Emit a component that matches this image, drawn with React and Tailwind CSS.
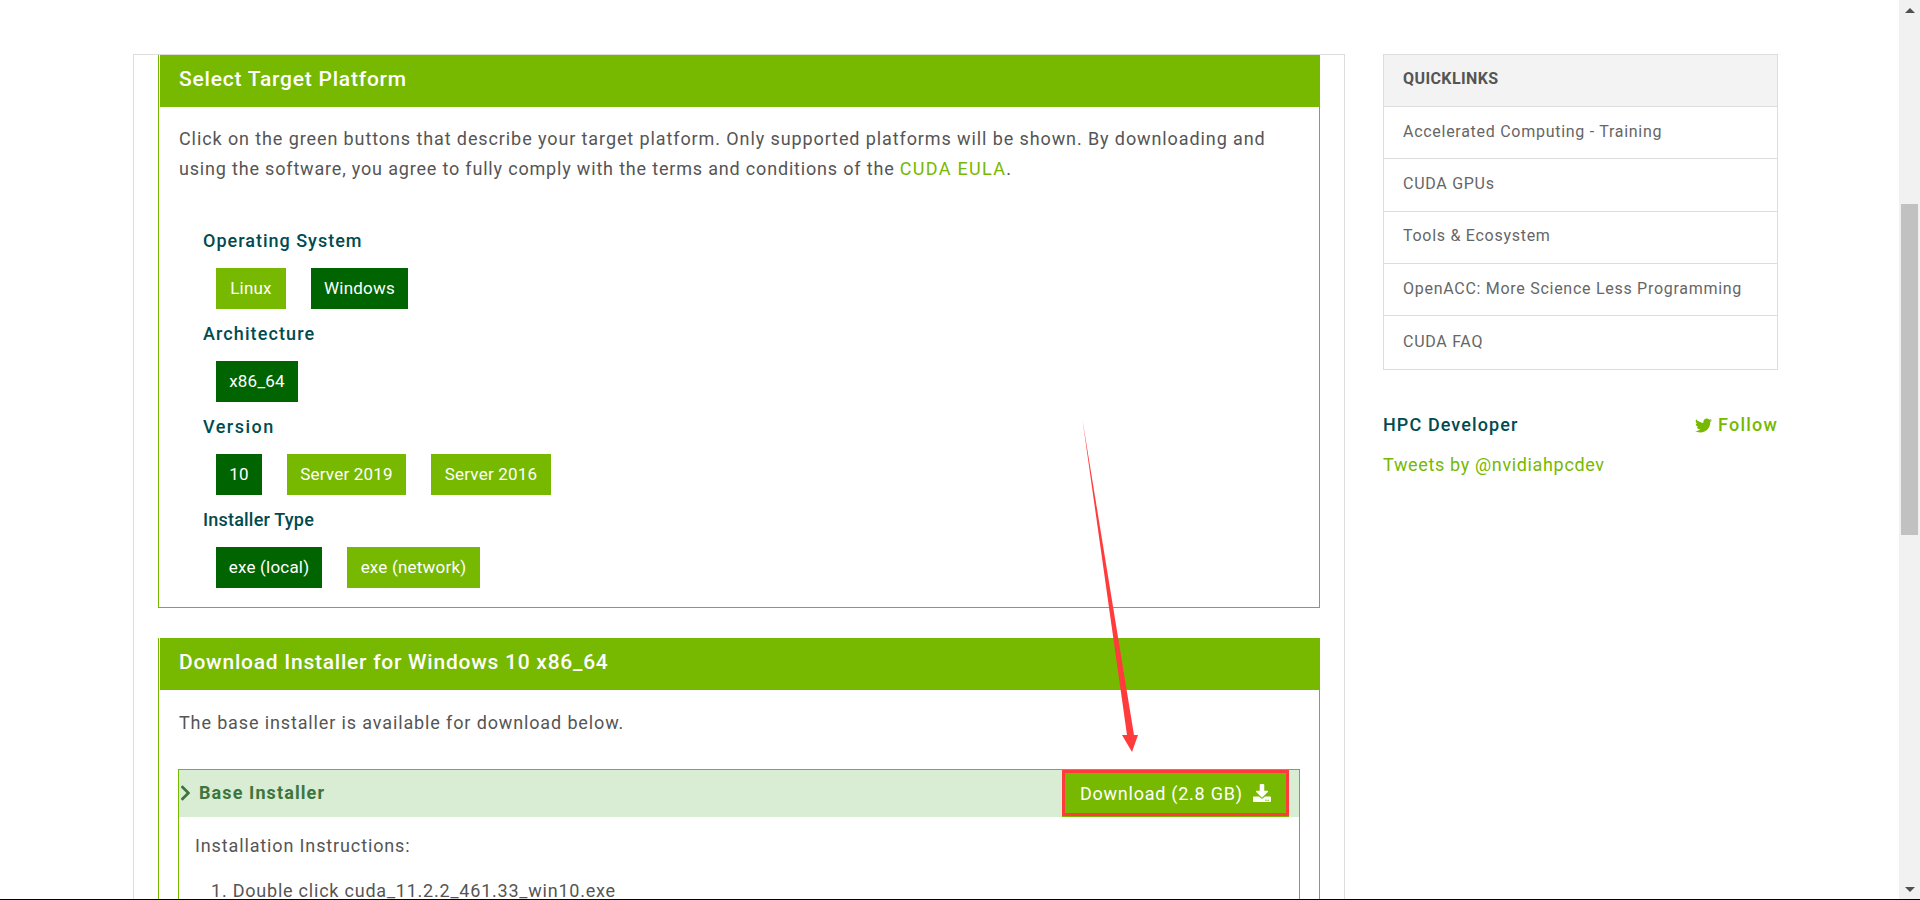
import React from "react";
import { FaChevronRight, FaDownload, FaTwitter } from "react-icons/fa";

const font = { fontFamily: "Roboto, 'Noto Sans', sans-serif" };

const platformRows = [
  {
    label: "Operating System",
    tracking: "tracking-[1px]",
    options: [
      { text: "Linux", width: "w-[70px]" },
      { text: "Windows", width: "w-[97px]", active: true },
    ],
  },
  {
    label: "Architecture",
    tracking: "tracking-[1.1px]",
    options: [{ text: "x86_64", width: "w-[82px]", active: true }],
  },
  {
    label: "Version",
    tracking: "tracking-[1.5px]",
    options: [
      { text: "10", width: "w-[46px]", active: true },
      { text: "Server 2019", width: "w-[119px]" },
      { text: "Server 2016", width: "w-[120px]" },
    ],
  },
  {
    label: "Installer Type",
    tracking: "tracking-[0.2px]",
    options: [
      { text: "exe (local)", width: "w-[106px]", active: true },
      { text: "exe (network)", width: "w-[133px]" },
    ],
  },
];

const quicklinks = [
  { text: "Accelerated Computing - Training", height: "h-[52px] pb-[1px]" },
  { text: "CUDA GPUs", height: "h-[53px] pb-[3px]" },
  { text: "Tools & Ecosystem", height: "h-[52px] pb-[3px]" },
  { text: "OpenACC: More Science Less Programming", height: "h-[52px] pb-[2px]" },
  { text: "CUDA FAQ", height: "h-[54px] pb-[2px]" },
];

const PanelHeader = ({ tracking, children }) => (
  <div
    className={`ml-px -mr-px flex h-[52px] items-center bg-[#76b900] pb-[2px] pl-[19px] text-[21px] font-medium text-white ${tracking}`}
  >
    {children}
  </div>
);

const Scrollbar = () => (
  <div className="flex h-full w-[21px] shrink-0 flex-col items-center bg-[#f1f1f1]">
    <div className="mt-[8px] h-0 w-0 border-x-[5px] border-b-[5px] border-x-transparent border-b-[#505050]" />
    <div className="mt-[191px] h-[331px] w-[17px] bg-[#c1c1c1]" />
    <div className="mt-[352px] h-0 w-0 border-x-[5px] border-t-[5px] border-x-transparent border-t-[#505050]" />
  </div>
);

export default function App() {
  return (
    <div className="relative h-[900px] w-full overflow-hidden bg-white" style={font}>
      <div className="flex h-[899px]">
        <div className="flex min-w-0 flex-1 overflow-hidden pl-[133px] pt-[54px]">
          {/* main column */}
          <div className="w-[1212px] shrink-0 border-x border-t border-[#dddddd] pl-[24px]">
            <section className="w-[1162px] border-x border-b border-[#76b900]">
              <PanelHeader tracking="tracking-[0.78px]">Select Target Platform</PanelHeader>
              <p className="mt-[17px] pl-[20px] text-[18px] leading-[30px] tracking-[0.9px] whitespace-nowrap text-[#555555]">
                Click on the green buttons that describe your target platform. Only supported platforms will be shown. By downloading and
                <br />
                <span className="tracking-[0.82px]">
                  using the software, you agree to fully comply with the terms and conditions of the{" "}
                </span>
                <span className="tracking-[1.3px] text-[#76b900]">CUDA EULA</span>.
              </p>
              <div className="mt-[41px] pl-[44px]">
                {platformRows.map((row) => (
                  <div key={row.label} className="h-[93px] pt-px">
                    <div
                      className={`mb-[12px] h-[30px] text-[18px] font-medium leading-[30px] text-[#004b50] ${row.tracking}`}
                    >
                      {row.label}
                    </div>
                    <div className="ml-[13px] flex gap-[25px]">
                      {row.options.map((option) => (
                        <div
                          key={option.text}
                          className={`flex h-[41px] items-center justify-center text-[17px] tracking-[0.2px] text-white ${option.width} ${
                            option.active ? "bg-[#006400]" : "bg-[#76b900]"
                          }`}
                        >
                          {option.text}
                        </div>
                      ))}
                    </div>
                  </div>
                ))}
              </div>
              <div className="h-[10px]" />
            </section>

            <section className="mt-[30px] w-[1162px] border-x border-[#76b900] pb-10">
              <PanelHeader tracking="tracking-[0.75px]">Download Installer for Windows 10 x86_64</PanelHeader>
              <p className="mt-[18px] pl-[20px] text-[18px] leading-[30px] tracking-[0.87px] text-[#555555]">
                The base installer is available for download below.
              </p>
              <div className="ml-[19px] mt-[31px] w-[1122px] border border-[#76b900] pb-10">
                <div className="flex h-[47px] items-start justify-between bg-[#d9ecd4] pr-[10px]">
                  <div className="flex h-[47px] items-center pb-[2px] text-[18px] font-bold tracking-[1.1px] text-[#3c763d]">
                    <FaChevronRight className="ml-[1px] mr-[8px] h-[18px] w-[11px]" />
                    Base Installer
                  </div>
                  <div className="flex h-[46px] w-[227px] items-center border-[3px] border-[#ff3b3b] bg-[#76b900] pl-[15px] text-[18px] tracking-[0.75px] text-white shadow-[0_1px_0_#76b900]">
                    Download (2.8 GB)
                    <FaDownload className="ml-[10px] h-[18px] w-[18px]" />
                  </div>
                </div>
                <p className="ml-[16px] mt-[14px] text-[18px] leading-[30px] tracking-[0.87px] text-[#555555]">
                  Installation Instructions:
                </p>
                <p className="ml-[32px] mt-[15px] text-[18px] leading-[30px] tracking-[0.78px] text-[#555555]">
                  1. Double click cuda_11.2.2_461.33_win10.exe
                </p>
              </div>
            </section>
          </div>

          {/* quicklinks + social */}
          <aside className="ml-[38px] w-[395px] shrink-0">
            <div className="border border-[#dddddd]">
              <div className="flex h-[51px] items-center bg-[#f3f3f3] pb-[3px] pl-[19px] text-[16px] font-bold tracking-[0.4px] text-[#555555]">
                QUICKLINKS
              </div>
              {quicklinks.map((link) => (
                <div
                  key={link.text}
                  className={`flex items-center border-t border-[#dddddd] pl-[19px] text-[16px] tracking-[0.72px] text-[#666666] ${link.height}`}
                >
                  {link.text}
                </div>
              ))}
            </div>
            <div className="mt-[39px] flex items-center justify-between">
              <span className="text-[18px] font-medium leading-[30px] tracking-[1.1px] text-[#004b50]">
                HPC Developer
              </span>
              <span className="mt-px flex items-center text-[18px] font-medium leading-[30px] tracking-[1.2px] text-[#76b900]">
                <FaTwitter className="mr-[6px] h-[17px] w-[17px]" />
                Follow
              </span>
            </div>
            <div className="mt-[10px] text-[18px] leading-[30px] tracking-[0.65px] text-[#76b900]">
              Tweets by @nvidiahpcdev
            </div>
          </aside>
        </div>
        <Scrollbar />
      </div>
      <div className="h-px bg-black" />

      {/* red annotation arrow drawn over the page */}
      <svg className="pointer-events-none absolute left-0 top-0" width="1920" height="900">
        <polygon points="1082.5,420 1127,735 1122,735 1132,752 1138,735 1134,735" fill="#ff3b3b" />
      </svg>
    </div>
  );
}
